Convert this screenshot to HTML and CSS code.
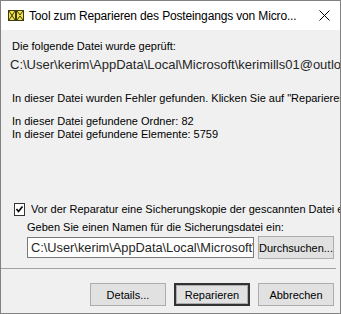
FILE: index.html
```html
<!DOCTYPE html>
<html>
<head>
	<meta charset="UTF-8">
	<title>Tool zum Reparieren des Posteingangs</title>
	<link rel="stylesheet" href="styles.css">
</head>
<body>
	<div class="window">
		<div class="titlebar">
			<svg class="appicon" width="16" height="12" viewBox="0 0 16 12">
				<rect x="0.5" y="0.5" width="7" height="10" fill="#f2e24a" stroke="#3b3a10"/>
				<path d="M1 1 L7 10 M7 1 L1 10" stroke="#3b3a10" stroke-width="1"/>
				<rect x="8.5" y="0.5" width="7" height="10" fill="#f2e24a" stroke="#3b3a10"/>
				<path d="M9 1 L12 5 L15 1 M9 10 L12 6 L15 10" stroke="#3b3a10" stroke-width="1" fill="none"/>
			</svg>
			<span class="title">Tool zum Reparieren des Posteingangs von Micro...</span>
			<svg class="close" width="11" height="11" viewBox="0 0 11 11">
				<path d="M0.5 0.5 L10.5 10.5 M10.5 0.5 L0.5 10.5" stroke="#000" stroke-width="1"/>
			</svg>
		</div>
		<div class="content">
			<p class="txt">Die folgende Datei wurde geprüft:</p>
			<p class="path">C:\User\kerim\AppData\Local\Microsoft\kerimills01@outlook.com.ost</p>
			<p class="txt err">In dieser Datei wurden Fehler gefunden. Klicken Sie auf "Reparieren", um sie zu beheben.</p>
			<p class="txt stat">In dieser Datei gefundene Ordner: 82</p>
			<p class="txt">In dieser Datei gefundene Elemente: 5759</p>

			<label class="check">
				<span class="box">
					<svg width="9" height="9" viewBox="0 0 9 9"><path d="M1.5 4 L3.5 6.5 L7.5 1.5" stroke="#000" stroke-width="1.6" fill="none"/></svg>
				</span>
				<span class="txt">Vor der Reparatur eine Sicherungskopie der gescannten Datei erstellen</span>
			</label>
			<div class="backup">
				<p class="txt">Geben Sie einen Namen für die Sicherungsdatei ein:</p>
				<div class="row">
					<div class="field">C:\User\kerim\AppData\Local\Microsoft\kerimills01@outlook.com.bak</div>
					<button class="btn browse">Durchsuchen...</button>
				</div>
			</div>
		</div>
		<div class="sep"></div>
		<div class="footer">
			<button class="btn">Details...</button>
			<button class="btn default">Reparieren</button>
			<button class="btn">Abbrechen</button>
		</div>
	</div>
</body>
</html>
```

FILE: styles.css
```css
body {
	margin: 0;
	background: #fff;
}

.window {
	width: 341px;
	height: 314px;
	box-sizing: border-box;
	border: 1px solid #828282;
	background: #f0f0f0;
	display: flex;
	flex-direction: column;
	overflow: hidden;
}

.titlebar {
	height: 29px;
	background: #fff;
	display: flex;
	align-items: center;
	flex-shrink: 0;
}

.appicon {
	margin: 1px 0 0 7px;
}

.title {
	margin-left: 5px;
	font: 12px "Liberation Sans", sans-serif;
	letter-spacing: -0.15px;
	color: #000;
	white-space: nowrap;
	flex: 1;
}

.close {
	margin: 0 10px 0 0;
}

.content {
	padding: 10px 0 0 11px;
	flex: 1;
	overflow: hidden;
}

p {
	margin: 0;
}

.txt {
	font: 11px "Liberation Sans", sans-serif;
	color: #000;
	white-space: nowrap;
	line-height: 13px;
}

.path {
	margin: 4px 0 0 -2px;
	font: 13px "Liberation Sans", sans-serif;
	color: #262626;
	white-space: nowrap;
	line-height: 16px;
}

.err {
	margin-top: 19px;
}

.stat {
	margin-top: 10px;
}

.check {
	display: flex;
	align-items: center;
	margin-top: 62px;
}

.box {
	width: 11px;
	height: 11px;
	border: 1px solid #333;
	background: #fff;
	display: flex;
	align-items: center;
	justify-content: center;
	margin: 0 6px 0 2px;
}

.backup {
	padding-left: 15px;
	margin-top: 5px;
}

.row {
	display: flex;
	align-items: center;
	margin-top: 2px;
}

.field {
	width: 222px;
	height: 19px;
	border: 1px solid #7a7a7a;
	background: #fff;
	font: 12.8px "Liberation Sans", sans-serif;
	color: #262626;
	line-height: 19px;
	padding-left: 3px;
	white-space: nowrap;
	overflow: hidden;
}

.btn {
	font: 11px "Liberation Sans", sans-serif;
	color: #000;
	background: #e1e1e1;
	border: 1px solid #adadad;
	height: 23px;
	padding: 0;
	outline: none;
}

.browse {
	width: 76px;
	margin-left: 4px;
}

.sep {
	height: 1px;
	background: #a0a0a0;
	margin: 0 4px 0 0;
	flex-shrink: 0;
}

.footer {
	height: 44px;
	display: flex;
	justify-content: flex-end;
	align-items: flex-start;
	padding: 14px 6px 0 0;
	gap: 8px;
	box-sizing: border-box;
	flex-shrink: 0;
}

.footer .btn {
	width: 76px;
}

.default {
	border: 2px solid #333;
	box-shadow: inset 0 0 0 1px #adadad;
}
```
